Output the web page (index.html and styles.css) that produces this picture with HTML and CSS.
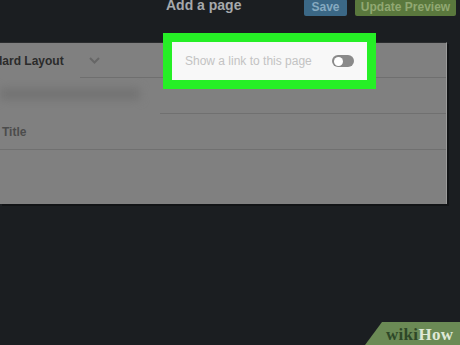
FILE: index.html
```html
<!DOCTYPE html>
<html>
<head>
  <title>Add a page</title>
  <link rel="stylesheet" href="styles.css">
</head>
<body>
  <div class="topbar">
    <h1 class="title">Add a page</h1>
    <button class="btn btn-save">Save</button>
    <button class="btn btn-preview">Update Preview</button>
  </div>

  <div class="panel">
    <div class="row row-layout">
      <span class="layout-name">Standard Layout</span>
      <svg class="chevron" width="11" height="7" viewBox="0 0 11 7">
        <path d="M1 1 L5.5 5.5 L10 1" fill="none" stroke="#666" stroke-width="2"/>
      </svg>
    </div>
    <div class="row row-blur">
      <div class="blur-item"></div>
    </div>
    <div class="row row-title">
      <span class="field-label">Title</span>
    </div>
  </div>

  <div class="highlight">
    <span class="link-label">Show a link to this page</span>
    <span class="toggle"><span class="knob"></span></span>
  </div>

  <div class="wikihow"><span class="wiki">wiki</span><span class="how">How</span></div>
</body>
</html>
```

FILE: styles.css
```css
body {
  background-color: #1b1e21;
  margin: 0;
  padding: 0;
  width: 460px;
  height: 345px;
  overflow: hidden;
  position: relative;
  font-family: 'Liberation Sans', Arial, sans-serif;
}
.topbar {
  display: flex;
  align-items: flex-start;
  height: 42px;
  padding-left: 166px;
}
.title {
  margin: -3px 0 0 0;
  font-size: 14px;
  font-weight: bold;
  color: #a6a9ac;
  width: 138px;
}
.btn {
  border: none;
  border-radius: 2px;
  height: 17px;
  margin-top: -1px;
  padding: 0;
  font-family: 'Liberation Sans', Arial, sans-serif;
  font-size: 12px;
  font-weight: bold;
  line-height: 17px;
}
.btn-save {
  width: 43px;
  background-color: #3b6886;
  color: #86aac0;
}
.btn-preview {
  width: 101px;
  margin-left: 8px;
  background-color: #5a783d;
  color: #91a872;
}
.panel {
  width: 447px;
  height: 162px;
  background-color: #808080;
  border-top: 1px solid #2a2c2e;
  border-right: 1px solid #9a9a9a;
  box-shadow: 2px 2px 0 #121416;
  box-sizing: border-box;
}
.row {
  display: flex;
  align-items: center;
}
.row-layout {
  height: 35px;
  position: relative;
}
.row-layout::after {
  content: '';
  position: absolute;
  left: 80px;
  right: 0;
  bottom: 0;
  height: 1px;
  background-color: #6f6f6f;
}
.layout-name {
  margin-left: -31px;
  font-size: 12px;
  font-weight: bold;
  color: #2b2b2b;
}
.chevron {
  margin-left: 25px;
}
.row-blur {
  height: 36px;
  position: relative;
}
.row-blur::after {
  content: '';
  position: absolute;
  left: 160px;
  right: 0;
  bottom: 0;
  height: 1px;
  background-color: #707070;
}
.blur-item {
  width: 140px;
  height: 12px;
  margin-top: -4px;
  background-color: #737373;
  filter: blur(4px);
}
.row-title {
  height: 35px;
  border-bottom: 1px solid #707070;
}
.field-label {
  margin-left: 2px;
  font-size: 12px;
  font-weight: bold;
  color: #4c4c4c;
}
.highlight {
  position: absolute;
  left: 163px;
  top: 33px;
  width: 195px;
  height: 38px;
  border: 9px solid #26ef26;
  background-color: #f8f8f8;
  display: flex;
  align-items: center;
}
.link-label {
  margin-left: 13px;
  font-size: 12px;
  color: #c3c3c3;
  width: 147px;
}
.toggle {
  width: 22px;
  height: 12px;
  border-radius: 6px;
  background-color: #8a8a8a;
  display: flex;
  align-items: center;
}
.knob {
  width: 9px;
  height: 9px;
  margin-left: 2px;
  border-radius: 50%;
  background-color: #fff;
}
.wikihow {
  position: absolute;
  right: 0;
  bottom: 0;
  width: 74px;
  height: 23px;
  padding-left: 21px;
  background-color: #6b8a55;
  clip-path: polygon(17px 0, 100% 0, 100% 100%, 0 100%);
  font-family: 'Liberation Serif', 'Times New Roman', serif;
  font-size: 17px;
  font-weight: bold;
  line-height: 25px;
  letter-spacing: 0.3px;
}
.wiki {
  color: #2e4828;
}
.how {
  color: #dfe8d6;
}
```
